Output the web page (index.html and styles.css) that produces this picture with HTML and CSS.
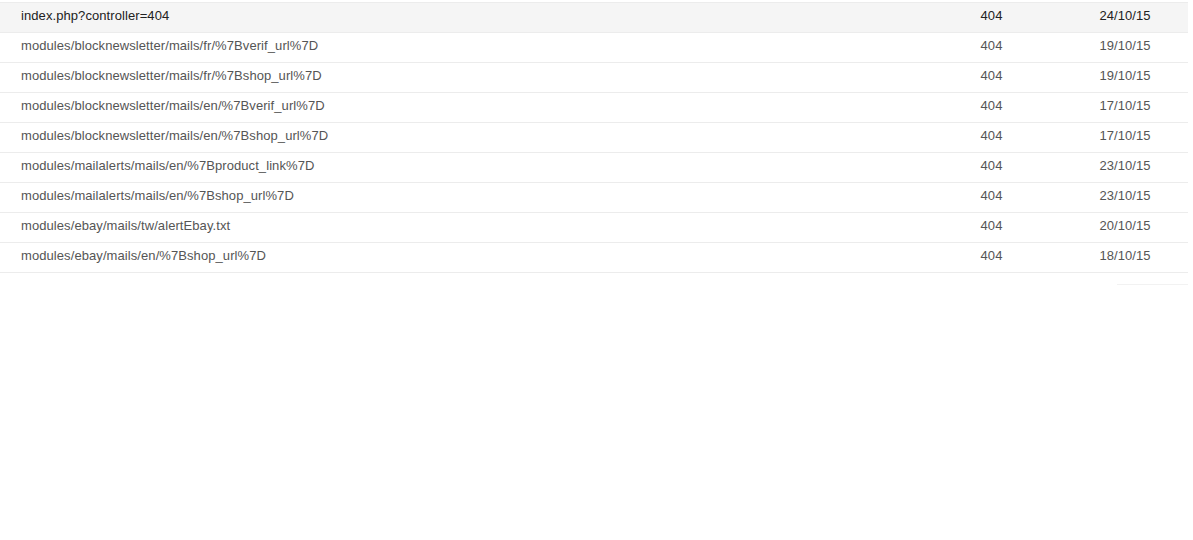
FILE: index.html
```html
<!DOCTYPE html>
<html>
<head>
<meta charset="utf-8">
<link rel="stylesheet" href="styles.css">
</head>
<body>
<div class="panel">
  <table class="log">
    <tbody>
      <tr class="row active"><td class="url">index.php?controller=404</td><td class="code">404</td><td class="date">24/10/15</td></tr>
      <tr class="row"><td class="url">modules/blocknewsletter/mails/fr/%7Bverif_url%7D</td><td class="code">404</td><td class="date">19/10/15</td></tr>
      <tr class="row"><td class="url">modules/blocknewsletter/mails/fr/%7Bshop_url%7D</td><td class="code">404</td><td class="date">19/10/15</td></tr>
      <tr class="row"><td class="url">modules/blocknewsletter/mails/en/%7Bverif_url%7D</td><td class="code">404</td><td class="date">17/10/15</td></tr>
      <tr class="row"><td class="url">modules/blocknewsletter/mails/en/%7Bshop_url%7D</td><td class="code">404</td><td class="date">17/10/15</td></tr>
      <tr class="row"><td class="url">modules/mailalerts/mails/en/%7Bproduct_link%7D</td><td class="code">404</td><td class="date">23/10/15</td></tr>
      <tr class="row"><td class="url">modules/mailalerts/mails/en/%7Bshop_url%7D</td><td class="code">404</td><td class="date">23/10/15</td></tr>
      <tr class="row"><td class="url">modules/ebay/mails/tw/alertEbay.txt</td><td class="code">404</td><td class="date">20/10/15</td></tr>
      <tr class="row"><td class="url">modules/ebay/mails/en/%7Bshop_url%7D</td><td class="code">404</td><td class="date">18/10/15</td></tr>
    </tbody>
  </table>
  <div class="footer"><div class="pager"></div></div>
</div>
</body>
</html>
```
FILE: styles.css
```css
html, body {
  margin: 0;
  padding: 0;
  background: #fff;
}
body {
  font-family: "Liberation Sans", Arial, sans-serif;
  font-size: 13px;
  color: #555;
  letter-spacing: 0.08px;
}
.panel {
  width: 1188px;
  padding-top: 2px;
}
.log {
  width: 100%;
  border-collapse: collapse;
  border-top: 1px solid #ececec;
  table-layout: fixed;
}
.row td {
  height: 25px;
  padding: 0 0 4px 0;
  border-bottom: 1px solid #ececec;
  vertical-align: middle;
  white-space: nowrap;
}
.row.active td {
  background: #f5f5f5;
  color: #222;
}
.row td.url {
  padding-left: 21px;
}
.code {
  width: 141px;
  text-align: center;
}
.date {
  width: 126px;
  text-align: center;
}
.footer {
  display: flex;
  justify-content: flex-end;
  padding-top: 11px;
}
.pager {
  width: 71px;
  height: 8px;
  border-top: 1px solid #f2f2f2;
}
```
